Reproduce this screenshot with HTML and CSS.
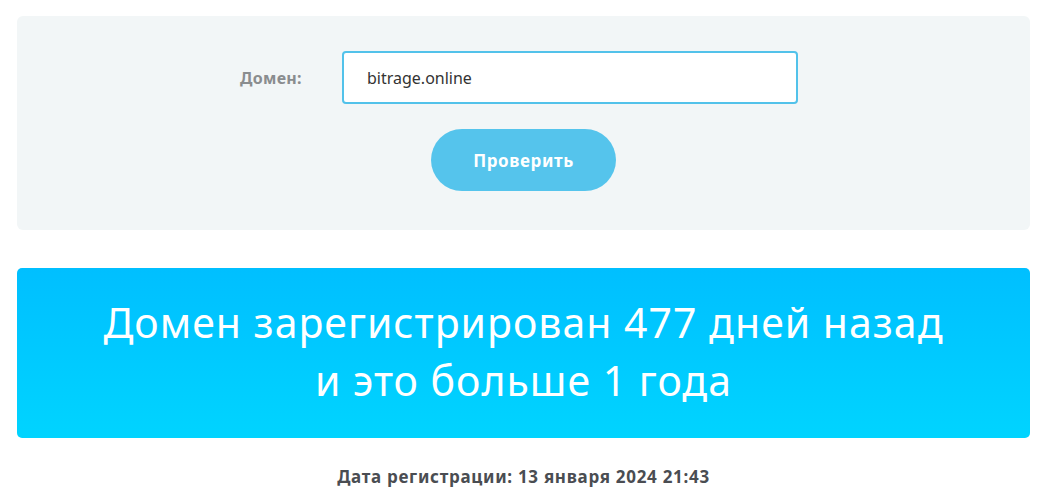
FILE: index.html
```html
<!DOCTYPE html>
<html lang="ru">
<head>
  <meta charset="UTF-8">
  <title>Проверка возраста домена</title>
  <link rel="stylesheet" href="styles.css">
</head>
<body>

  <form class="check-form" onsubmit="return false">
    <div class="row">
      <label class="field-label" for="domain">Домен:</label>
      <input class="field-input" type="text" id="domain" value="bitrage.online">
    </div>
    <button class="btn" type="submit">Проверить</button>
  </form>

  <div class="result">
    Домен зарегистрирован 477 дней назад<br>
    и это больше 1 года
  </div>

  <p class="reg-date">Дата регистрации: 13 января 2024 21:43</p>

</body>
</html>
```

FILE: styles.css
```css
body {
  margin: 16px 14px 0 17px;
  font-family: "Noto Sans", "Open Sans", sans-serif;
  background: #fff;
  color: #444;
}
.check-form {
  background: #f2f6f7;
  border-radius: 6px;
  height: 214px;
  box-sizing: border-box;
  padding-top: 35px;
  display: flex;
  flex-direction: column;
  align-items: center;
}
.row {
  display: flex;
  align-items: center;
  margin-left: -9px;
}
.field-label {
  width: 102px;
  font-size: 16px;
  font-weight: 700;
  letter-spacing: 0.3px;
  color: #8a8d8f;
}
.field-input {
  width: 456px;
  height: 53px;
  box-sizing: border-box;
  border: 2px solid #52c2ea;
  border-radius: 4px;
  padding: 0 23px;
  font-family: inherit;
  font-size: 16px;
  color: #333;
  outline: none;
}
.btn {
  margin-top: 25px;
  width: 185px;
  height: 62px;
  border: none;
  border-radius: 31px;
  background: #55c4ec;
  color: #fff;
  font-family: inherit;
  font-size: 17px;
  font-weight: 700;
  letter-spacing: 0.6px;
  cursor: pointer;
}
.result {
  margin-top: 38px;
  height: 170px;
  box-sizing: border-box;
  padding-top: 25px;
  border-radius: 5px;
  background: linear-gradient(to bottom, #00bfff, #00d4ff);
  color: #fff;
  text-align: center;
  font-size: 41px;
  font-weight: 400;
  letter-spacing: 1px;
  line-height: 58px;
}
.reg-date {
  margin: 27px 0 0;
  text-align: center;
  font-size: 17px;
  font-weight: 700;
  letter-spacing: 0.7px;
  color: #4a4d52;
}
```
